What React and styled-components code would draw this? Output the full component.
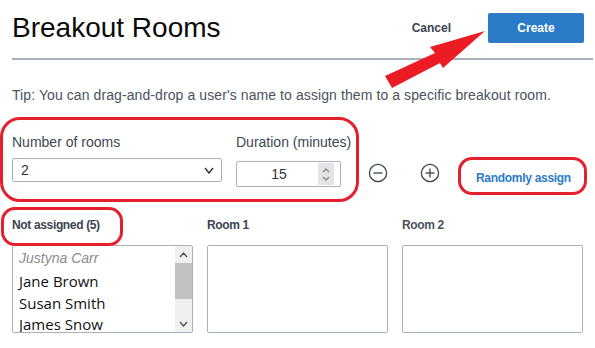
import React from 'react';
import styled, { createGlobalStyle } from 'styled-components';

const GlobalStyle = createGlobalStyle`
  html, body {
    margin: 0;
    background: #fff;
    overflow: hidden;
  }
  body {
    font-family: "Liberation Sans", Arial, sans-serif;
  }
`

const Page = styled.div`
  position: relative;
  box-sizing: border-box;
  width: 595px;
  height: 348px;
  padding: 12px 11px 0 12px;
  overflow: hidden;
`

const Header = styled.div`
  display: flex;
  align-items: center;
  justify-content: space-between;
  height: 32px;
`

const Title = styled.h1`
  margin: 0;
  font-size: 28px;
  font-weight: 400;
  line-height: 32px;
  color: #0b0b0b;
`

const Actions = styled.div`
  display: flex;
  align-items: center;
`

const TextButton = styled.button`
  background: none;
  border: none;
  padding: 0;
  margin-right: 37px;
  font-family: inherit;
  font-size: 12px;
  font-weight: 700;
  color: #3c4450;
`

const PrimaryButton = styled.button`
  width: 96px;
  height: 30px;
  border: none;
  border-radius: 2px;
  background: #2b7bc9;
  color: #fff;
  font-family: inherit;
  font-size: 12px;
  font-weight: 700;
`

const Divider = styled.hr`
  margin: 14px -9px 0 0;
  height: 2px;
  border: none;
  background: #a8b0b9;
`

const Tip = styled.p`
  margin: 27px 0 0;
  font-size: 14px;
  line-height: 16px;
  letter-spacing: 0.09px;
  color: #4a5260;
`

const Controls = styled.div`
  display: flex;
  align-items: flex-end;
  margin-top: 31px;
`

const Field = styled.label`
  display: flex;
  flex-direction: column;
  width: ${p => p.$width}px;
  margin-right: 14px;
  margin-bottom: ${p => p.$lift || 0}px;
`

const Label = styled.span`
  font-size: 14px;
  line-height: 16px;
  color: #3e4654;
  white-space: nowrap;
  margin-bottom: ${p => p.$gap}px;
`

const SelectBox = styled.div`
  display: flex;
  align-items: center;
  justify-content: space-between;
  box-sizing: border-box;
  height: 24px;
  padding: 0 7px 0 8px;
  border: 1px solid #a9b1ba;
  border-radius: 2px;
  font-size: 14px;
  color: #333;
`

const NumberBox = styled.div`
  display: flex;
  align-items: center;
  box-sizing: border-box;
  height: 26px;
  padding: 0 6px 0 0;
  border: 1px solid #a9b1ba;
  border-radius: 2px;
  font-size: 14px;
  color: #333;
`

const NumberValue = styled.span`
  flex: 1;
  text-align: center;
  padding-left: 3px;
`

const Spinner = styled.div`
  display: flex;
  flex-direction: column;
  align-items: center;
  justify-content: center;
  gap: 3px;
  width: 16px;
  height: 22px;
  background: #e4e4e8;
`

const IconButton = styled.button`
  display: flex;
  align-items: center;
  justify-content: center;
  width: 20px;
  height: 20px;
  padding: 0;
  margin-left: ${p => p.$space}px;
  margin-bottom: 4px;
  border: none;
  background: none;
`

const LinkButton = styled.button`
  background: none;
  border: none;
  padding: 0;
  margin-left: 36px;
  margin-bottom: 2px;
  font-family: inherit;
  font-size: 12px;
  line-height: 14px;
  font-weight: 700;
  letter-spacing: -0.3px;
  color: #2b7bc9;
`

const Columns = styled.div`
  display: grid;
  grid-template-columns: 181px 181px 181px;
  column-gap: 14px;
  margin-top: 31px;
`

const ColumnTitle = styled.h2`
  margin: 0 0 13px;
  font-size: 12px;
  line-height: 14px;
  font-weight: 700;
  letter-spacing: -0.35px;
  color: ${p => (p.$muted ? '#4a5260' : '#3c4450')};
  white-space: nowrap;
`

const Box = styled.div`
  display: flex;
  box-sizing: border-box;
  height: 88px;
  border: 1px solid #a9b1ba;
  border-radius: 2px;
  overflow: hidden;
`

const NameList = styled.ul`
  flex: 1;
  margin: 0;
  padding: 2px 0 0 6px;
  list-style: none;
`

const Dragged = styled.li`
  font-size: 14px;
  line-height: 20px;
  font-style: italic;
  color: #8c8c8c;
  margin-bottom: 3px;
`

const Name = styled.li`
  font-family: "Open Sans", "Noto Sans", sans-serif;
  font-size: 15px;
  line-height: 21.5px;
  color: #111;
`

const ScrollBar = styled.div`
  display: flex;
  flex-direction: column;
  width: 17px;
  background: #f0f0f0;
`

const ScrollArrow = styled.div`
  display: flex;
  align-items: center;
  justify-content: center;
  height: 17px;
`

const Thumb = styled.div`
  height: 36px;
  background: #c1c1c1;
`

const Track = styled.div`
  flex: 1;
`

const Mark = styled.div`
  position: absolute;
  left: ${p => p.$x}px;
  top: ${p => p.$y}px;
  width: ${p => p.$w}px;
  height: ${p => p.$h}px;
  box-sizing: border-box;
  border: 3.5px solid #e5202e;
  border-radius: ${p => p.$r}px;
  pointer-events: none;
`

const ArrowLayer = styled.svg`
  position: absolute;
  left: 0;
  top: 0;
  pointer-events: none;
`

function Chevron({ up, color = '#444', w = 9, h = 6 }) {
  const d = up ? `M1 ${h - 1} L${w / 2} 1 L${w - 1} ${h - 1}` : `M1 1 L${w / 2} ${h - 1} L${w - 1} 1`;
  return (
    <svg width={w} height={h} viewBox={`0 0 ${w} ${h}`}>
      <path d={d} fill="none" stroke={color} strokeWidth="1.4" />
    </svg>
  );
}

function CircleIcon({ plus }) {
  return (
    <svg width="20" height="20" viewBox="0 0 20 20">
      <circle cx="10" cy="10" r="8.6" fill="none" stroke="#3c4450" strokeWidth="1.3" />
      <path d="M5.5 10 H14.5" stroke="#3c4450" strokeWidth="1.3" />
      {plus && <path d="M10 5.5 V14.5" stroke="#3c4450" strokeWidth="1.3" />}
    </svg>
  );
}

const people = ['Jane Brown', 'Susan Smith', 'James Snow'];

export default function App() {
  return (
    <Page>
      <GlobalStyle />
      <Header>
        <Title>Breakout Rooms</Title>
        <Actions>
          <TextButton>Cancel</TextButton>
          <PrimaryButton>Create</PrimaryButton>
        </Actions>
      </Header>
      <Divider />
      <Tip>Tip: You can drag-and-drop a user's name to assign them to a specific breakout room.</Tip>

      <Controls>
        <Field $width={210} $lift={5}>
          <Label $gap={8}>Number of rooms</Label>
          <SelectBox>
            <span>2</span>
            <Chevron color="#333" w={10} h={7} />
          </SelectBox>
        </Field>
        <Field $width={105}>
          <Label $gap={11}>Duration (minutes)</Label>
          <NumberBox>
            <NumberValue>15</NumberValue>
            <Spinner>
              <Chevron up color="#888" w={8} h={5} />
              <Chevron color="#888" w={8} h={5} />
            </Spinner>
          </NumberBox>
        </Field>
        <IconButton $space={13}><CircleIcon /></IconButton>
        <IconButton $space={32}><CircleIcon plus /></IconButton>
        <LinkButton>Randomly assign</LinkButton>
      </Controls>

      <Columns>
        <div>
          <ColumnTitle>Not assigned (5)</ColumnTitle>
          <Box>
            <NameList>
              <Dragged>Justyna Carr</Dragged>
              {people.map(p => <Name key={p}>{p}</Name>)}
            </NameList>
            <ScrollBar>
              <ScrollArrow><Chevron up color="#555" w={9} h={6} /></ScrollArrow>
              <Thumb />
              <Track />
              <ScrollArrow><Chevron color="#555" w={9} h={6} /></ScrollArrow>
            </ScrollBar>
          </Box>
        </div>
        <div>
          <ColumnTitle>Room 1</ColumnTitle>
          <Box />
        </div>
        <div>
          <ColumnTitle $muted>Room 2</ColumnTitle>
          <Box />
        </div>
      </Columns>

      <Mark $x={0} $y={117} $w={359} $h={85} $r={20} />
      <Mark $x={458} $y={157} $w={129} $h={38} $r={14} />
      <Mark $x={1} $y={207} $w={122} $h={39} $r={14} />
      <ArrowLayer width="595" height="348">
        <polygon
          points="485,31 430,47 435,53 385,76 392,88 440,63 443,68"
          fill="#ec1c24"
        />
      </ArrowLayer>
    </Page>
  );
}
